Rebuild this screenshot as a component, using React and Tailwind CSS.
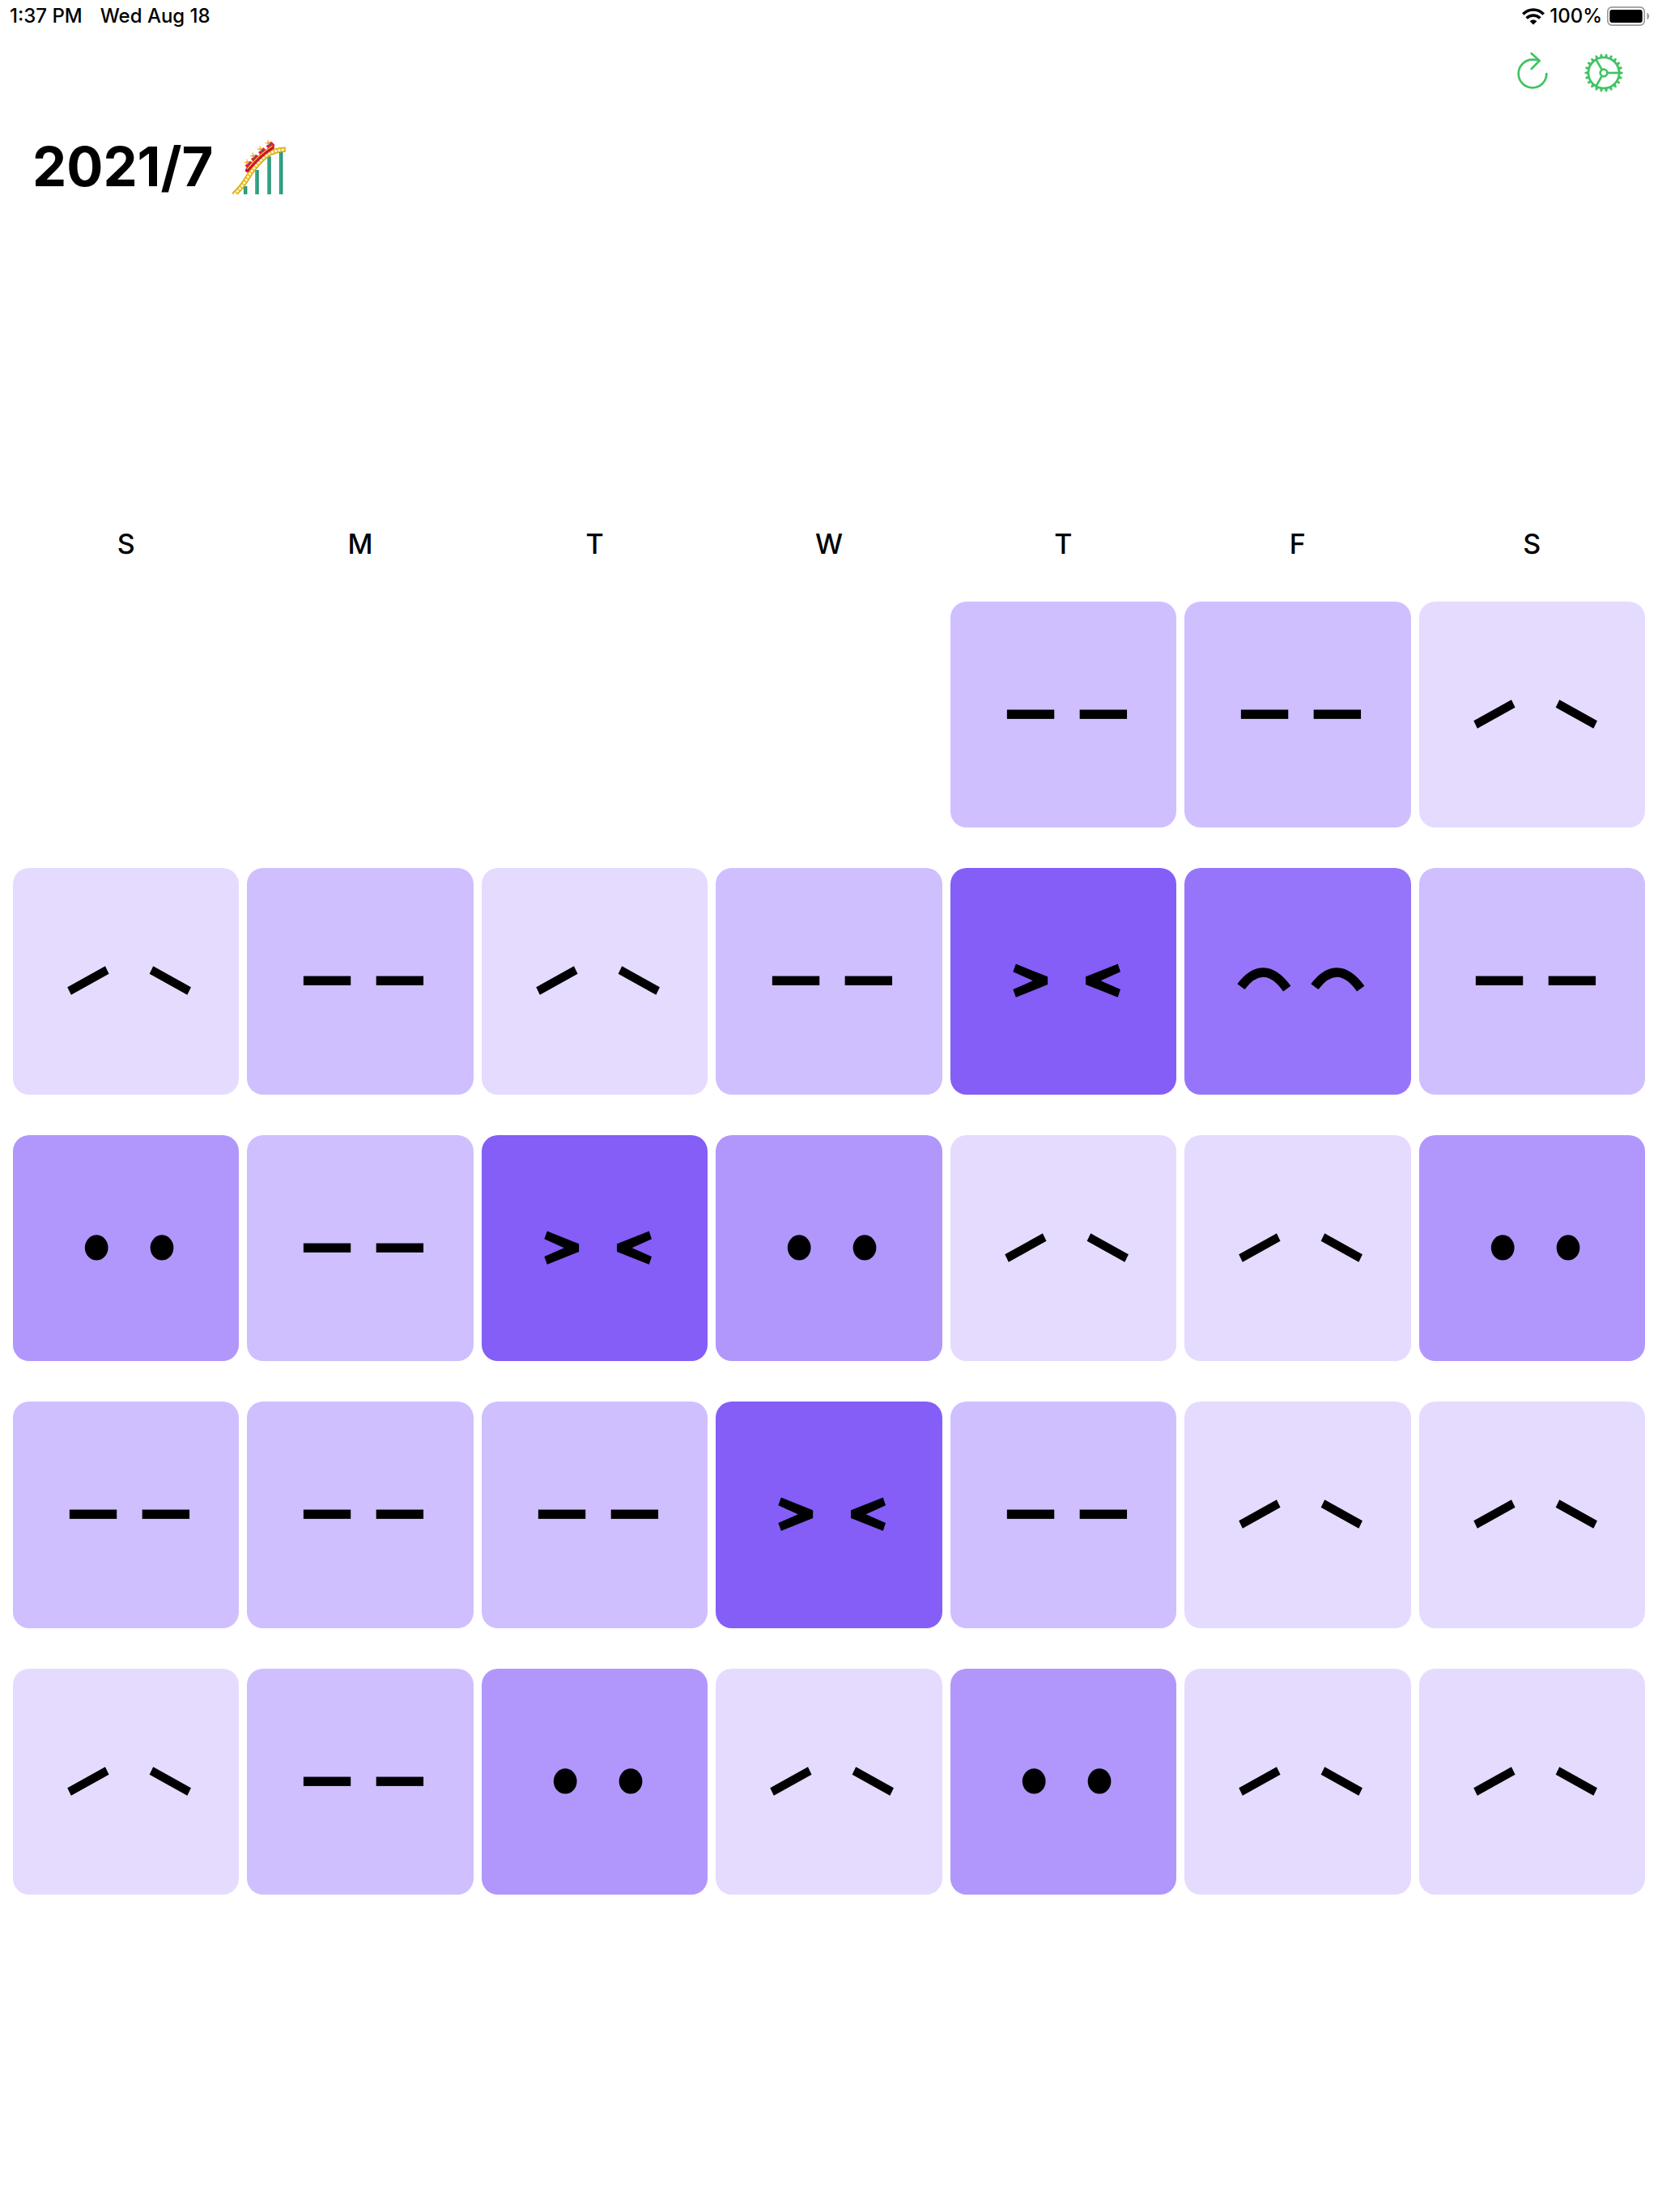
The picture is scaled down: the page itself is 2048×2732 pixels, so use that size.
const WEEKDAYS = [
  ["Sunday", "S"],
  ["Monday", "M"],
  ["Tuesday", "T"],
  ["Wednesday", "W"],
  ["Thursday", "T"],
  ["Friday", "F"],
  ["Saturday", "S"],
];

// Mood level for each day of July 2021, 1 (calm) to 5 (thrilled).
const DAYS = [
  2, 2, 1,
  1, 2, 1, 2, 5, 4, 2,
  3, 2, 5, 3, 1, 1, 3,
  2, 2, 2, 5, 2, 1, 1,
  1, 2, 3, 1, 3, 1, 1,
];

const LEVEL_COLORS = {
  1: "bg-[#e5dbff]",
  2: "bg-[#d0bfff]",
  3: "bg-[#b197fc]",
  4: "bg-[#9775fa]",
  5: "bg-[#845ef7]",
};

function Eyes({ level }) {
  switch (level) {
    case 1:
      return (
        <>
          <polygon points="67.4,147.6 114.2,121.6 118.8,131 72,157" />
          <polygon points="220.4,147.6 173.6,121.6 169,131 215.8,157" />
        </>
      );
    case 2:
      return (
        <>
          <rect x="70" y="133.8" width="58.5" height="11.4" />
          <rect x="160" y="133.8" width="58.5" height="11.4" />
        </>
      );
    case 3:
      return (
        <>
          <ellipse cx="103.4" cy="139.2" rx="14.4" ry="15.6" />
          <ellipse cx="184.4" cy="139.2" rx="14.4" ry="15.6" />
        </>
      );
    case 4:
      return (
        <g fill="none" stroke="black" strokeWidth="11.4">
          <path d="M70 147 C88 123 108 123 127 149.4" />
          <path d="M161.2 147 C179.2 123 199.2 123 218.2 149.4" />
        </g>
      );
    default:
      return (
        <>
          <path d="M81 118.8 L120.4 134.6 V144.4 L81 160 L77.5 150.3 L102 139.5 L77.5 128.4 Z" />
          <path d="M207.2 118.8 L167.4 134.6 V144.4 L207.2 160 L210.4 150.3 L186 139.5 L210.4 128.4 Z" />
        </>
      );
  }
}

function DayTile({ day, level }) {
  return (
    <button
      type="button"
      aria-label={`July ${day}, mood ${level}`}
      className={`block aspect-square w-full rounded-[20px] ${LEVEL_COLORS[level]} ${day === 1 ? "col-start-5" : ""}`}
    >
      <svg viewBox="0 0 280 280" className="block size-full" aria-hidden="true">
        <Eyes level={level} />
      </svg>
    </button>
  );
}

function WifiIcon() {
  return (
    <svg viewBox="0 0 84 62" className="h-[21px] w-[28px]" aria-hidden="true">
      <g fill="none" stroke="black" strokeWidth="11">
        <path d="M4 22 C25 0 59 0 80 22" />
        <path d="M17 37 C31 23 53 23 67 37" />
      </g>
      <path d="M29 48 C36 41 48 41 55 48 L42 61 Z" />
    </svg>
  );
}

function BatteryIcon() {
  return (
    <svg viewBox="0 0 160 72" className="h-6 w-[53px]" aria-hidden="true">
      <rect x="2.5" y="2.5" width="137" height="67" rx="16" fill="none" stroke="#9a9a9a" strokeWidth="5" />
      <rect x="10" y="12" width="122" height="48" rx="9" />
      <path d="M149 23 C160 28 160 44 149 49 Z" fill="#9a9a9a" />
    </svg>
  );
}

function ReloadIcon() {
  return (
    <svg viewBox="0 0 120 144" className="h-12 w-10" fill="none" stroke="currentColor" strokeWidth="8" strokeLinecap="round" aria-hidden="true">
      <path d="M112 81 A52 52 0 1 1 60 29 Q74 29 84 32" />
      <path d="M56 6 L86 33 L56 63" strokeLinejoin="round" />
    </svg>
  );
}

function GearIcon() {
  const teeth = Array.from({ length: 22 }, (_, i) => (i * 360) / 22);
  return (
    <svg viewBox="-72 -72 144 144" className="size-12" fill="none" stroke="currentColor" strokeWidth="8" aria-hidden="true">
      <circle r="57" />
      <circle r="13" />
      {[0, 120, 240].map((angle) => (
        <path key={angle} d="M14 0 H57" transform={`rotate(${angle})`} />
      ))}
      {teeth.map((angle) => (
        <path key={angle} d="M59 -6 L70 -3 Q72 0 70 3 L59 6 Z" fill="currentColor" stroke="none" transform={`rotate(${angle})`} />
      ))}
    </svg>
  );
}

function RollerCoaster() {
  const track = "M42 244 C66 224 82 204 96 180 C116 146 140 116 168 94 C188 80 212 73 240 72";
  const supports = [
    [90, 208],
    [133, 148],
    [178, 98],
    [222, 80],
  ];
  const cars = [
    [105, 130],
    [127, 106],
    [154, 81],
    [183, 58],
  ];
  return (
    <svg viewBox="42 34 198 204" className="h-[68px] w-[66px]" role="img" aria-label="roller coaster">
      {supports.map(([x, y]) => (
        <g key={x}>
          <rect x={x - 6} y={y} width="13" height={240 - y} fill="#1b8a70" />
          <rect x={x - 3} y={y} width="5" height={240 - y} fill="#35b08e" />
        </g>
      ))}
      <path d={track} fill="none" stroke="#b98a10" strokeWidth="19" />
      <path d={track} fill="none" stroke="#e8c020" strokeWidth="16" />
      <path d={track} fill="none" stroke="#fff6d8" strokeWidth="9" strokeLinecap="round" strokeDasharray="0.1 13" />
      {cars.map(([x, y]) => (
        <g key={x} transform={`translate(${x} ${y}) rotate(-40)`}>
          <path d="M-13 -8 Q-8 -14 -2 -6 L7 -11 Q14 -12 14 -4 V10 H-14 Z" fill="#e0203f" />
          <path d="M-3 -9 L4 -11 L5 -3 H-2 Z" fill="#2f6f8f" />
          <circle cx="1" cy="-13" r="5.5" fill="#efaa30" />
          <path d="M-3 -15 L-8 -21 M4 -17 L6 -24" stroke="#f3c545" strokeWidth="4" />
        </g>
      ))}
      <path d="M97 149 C122 119 153 88 190 64" fill="none" stroke="#c81432" strokeWidth="15" strokeLinecap="round" />
      <path d="M97 144 C122 113 153 82 191 58" fill="none" stroke="#f6c52c" strokeWidth="4" />
    </svg>
  );
}

export default function App() {
  return (
    <div className="min-h-screen bg-white font-['Inter',sans-serif] text-black">
      <div className="flex h-10 items-center justify-between pr-[10px] pl-3 text-2xl/[40px] font-medium">
        <div className="flex gap-[22px]">
          <span>1:37 PM</span>
          <span>Wed Aug 18</span>
        </div>
        <div className="flex items-center gap-[6px]">
          <WifiIcon />
          <span>100%</span>
          <BatteryIcon />
        </div>
      </div>

      <header>
        <div className="flex h-[100px] items-center justify-end gap-11 pr-[43px] text-[#40c463]">
          <button type="button" aria-label="Reload" className="pb-1">
            <ReloadIcon />
          </button>
          <button type="button" aria-label="Settings">
            <GearIcon />
          </button>
        </div>
        <h1 className="flex h-[132px] items-center gap-6 pl-10 text-[67px]/[80px] font-bold">
          <span>2021/7</span>
          <RollerCoaster />
        </h1>
      </header>

      <main className="px-4 pt-[376px]">
        <div className="grid grid-cols-7 gap-x-[10px] text-center text-[34px]/[48px] font-medium">
          {WEEKDAYS.map(([name, letter]) => (
            <abbr key={name} title={name} className="no-underline">
              {letter}
            </abbr>
          ))}
        </div>
        <div className="grid grid-cols-7 gap-x-[10px] gap-y-[50px] pt-[47px]">
          {DAYS.map((level, i) => (
            <DayTile key={i} day={i + 1} level={level} />
          ))}
        </div>
      </main>
    </div>
  );
}
